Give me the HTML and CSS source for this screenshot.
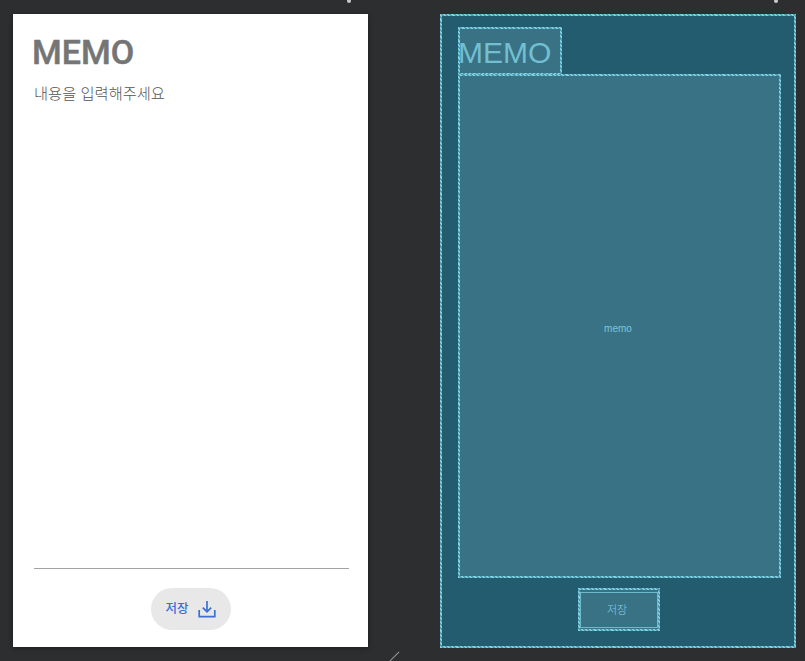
FILE: index.html
```html
<!DOCTYPE html>
<html lang="ko">
<head>
<meta charset="utf-8">
<title>MEMO</title>
<link rel="stylesheet" href="styles.css">
</head>
<body>
<div class="canvas">
  <section class="screen">
    <h1 class="title">MEMO</h1>
    <div class="memo-field">
      <p class="hint">내용을 입력해주세요</p>
    </div>
    <div class="actions">
      <button class="save" type="button">
        <span class="save-label">저장</span>
        <svg class="save-icon" width="18" height="18" viewBox="0 0 18 18" fill="none" stroke="#3b6fd6" stroke-width="1.7">
          <path d="M9 1v10.5"/>
          <path d="M4.8 7.6 9 11.8l4.2-4.2"/>
          <path d="M1.2 10v6.6h15.6V10"/>
        </svg>
      </button>
    </div>
  </section>

  <section class="blueprint dashed">
    <div class="bp-title dashed"><span class="bp-title-text">MEMO</span></div>
    <div class="bp-memo dashed"><span class="bp-memo-text">memo</span></div>
    <div class="bp-actions">
      <div class="bp-button dashed"><div class="bp-button-inner">저장</div></div>
    </div>
  </section>

  <i class="mark mark-a"></i>
  <i class="mark mark-b"></i>
  <i class="mark mark-c"></i>
</div>
</body>
</html>
```
FILE: styles.css
```css
* { box-sizing: border-box; }

html, body {
  margin: 0;
  height: 100%;
  overflow: hidden;
  background: #2d2e30;
}

.canvas {
  position: relative;
  display: flex;
  gap: 72px;
  width: 805px;
  height: 661px;
  padding: 14px 0 0 13px;
  font-family: "Liberation Sans", "Noto Sans CJK KR", sans-serif;
}

.screen {
  display: flex;
  flex-direction: column;
  width: 355px;
  height: 633px;
  padding: 0 19px 17px 21px;
  background: #fff;
  box-shadow: 0 1px 5px rgba(0, 0, 0, .45);
}

.title {
  margin: 14px 0 0 -2px;
  height: 48px;
  font-family: Roboto, sans-serif;
  font-size: 34px;
  line-height: 48px;
  font-weight: 500;
  color: #757575;
  -webkit-text-stroke: .5px #757575;
}

.memo-field {
  flex: 1;
  border-bottom: 1px solid #a3a3a3;
}

.hint {
  margin: 4px 0 0;
  font-family: "Noto Sans CJK KR", sans-serif;
  font-size: 15.3px;
  line-height: 24px;
  font-weight: 300;
  color: #555;
}

.actions {
  display: flex;
  justify-content: center;
  padding-top: 19px;
  margin-left: -2px;
}

.save {
  display: flex;
  align-items: center;
  gap: 9px;
  width: 80px;
  height: 42px;
  padding: 0 0 0 15px;
  border: 0;
  border-radius: 21px;
  background: #e8e8e8;
  color: #3b6fd6;
  font-family: "Noto Sans CJK KR", sans-serif;
  font-size: 12.5px;
  font-weight: 500;
}

.save-label { margin-top: -3px; }

.save-icon { flex: none; }

.dashed {
  border: 2px solid #5aa9bd;
  border-image: repeating-linear-gradient(45deg, #82cfe0 0 1.5px, #4f9db2 1.5px 3px) 2;
}

.blueprint {
  display: flex;
  flex-direction: column;
  width: 356px;
  height: 634px;
  padding: 11px 13px 15px 16px;
  background: #235c6e;
}

.bp-title {
  width: 104px;
  height: 48px;
  margin-bottom: -1px;
  background: #3a7285;
  color: #72bfd2;
  font-size: 30px;
  line-height: 48px;
  white-space: nowrap;
}

.bp-title-text { margin-left: -2px; }

.bp-memo {
  display: flex;
  align-items: center;
  justify-content: center;
  width: 323px;
  height: 504px;
  background: #3a7285;
  color: #7cc6d8;
  font-size: 10px;
}

.bp-memo-text { margin-top: 4px; margin-left: -3px; }

.bp-actions {
  display: flex;
  justify-content: center;
  padding-top: 10px;
  margin-left: -2px;
}

.bp-button {
  width: 82px;
  height: 43px;
  padding: 2px 0 1px;
  background: #3a7285;
}

.bp-button-inner {
  display: flex;
  align-items: center;
  justify-content: center;
  height: 100%;
  padding: 0 3px 2px 0;
  border: 1px solid #6fb9cc;
  color: #86cfe0;
  font-family: "Noto Sans CJK KR", sans-serif;
  font-size: 11px;
  font-weight: 300;
}

.mark { position: absolute; display: block; }

.mark-a, .mark-b {
  top: -1px;
  width: 4px;
  height: 4px;
  border-radius: 50%;
  background: #c8c8c8;
}

.mark-a { left: 347px; }
.mark-b { left: 774px; }

.mark-c {
  left: 388px;
  top: 656px;
  width: 13px;
  height: 1px;
  background: #9a9a9a;
  transform: rotate(-45deg);
}
```
